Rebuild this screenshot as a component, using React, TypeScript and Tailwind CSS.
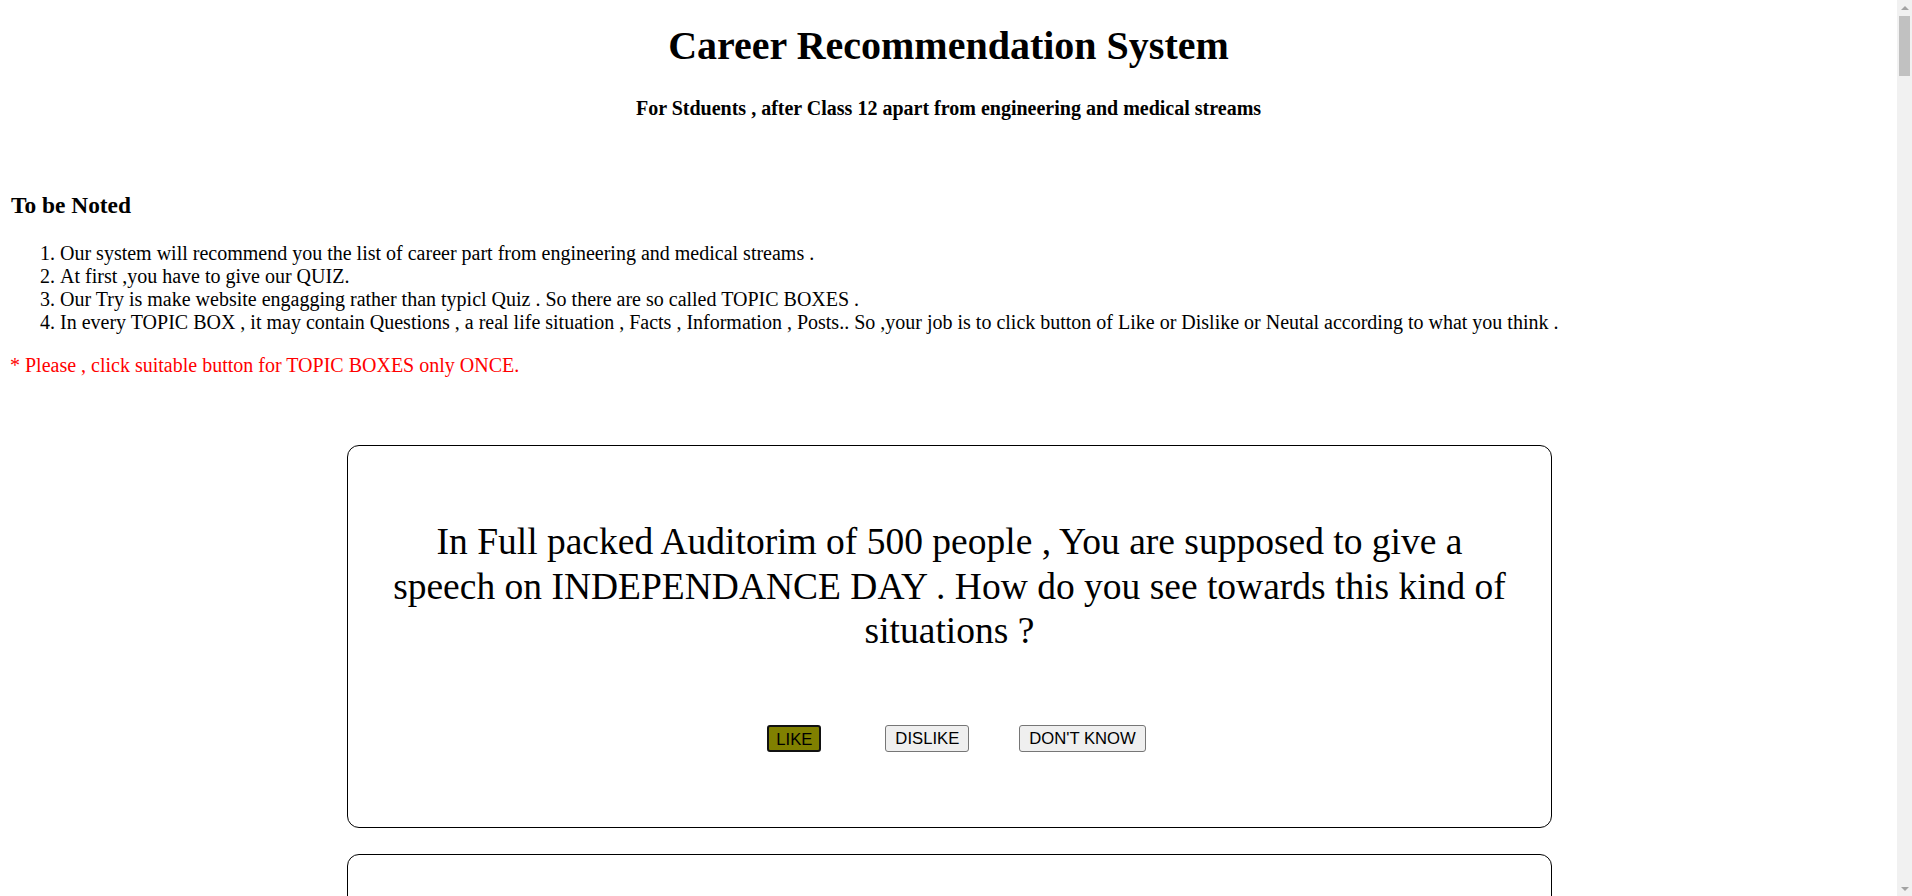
import React from 'react';

const topics: string[] = [
    'In Full packed Auditorim of 500 people , You are supposed to give a speech on INDEPENDANCE DAY . How do you see towards this kind of situations ?',
    'You have been given a chance to write an article for your school magazine . How do you feel about writing ?',
    'Fact : A Chartered Accountant audits accounts of big companies and helps them in managing their taxes .',
    'You are asked to draw a poster for the annual function of your school . How do you see towards this ?',
    'Your friend is sad and wants to talk to you about his problems . Do you like listening and helping people ?',
    'Information : Lawyers argue cases in court and help people to get justice .',
    'You are given a task to plan a trip for your whole class . How do you see towards managing such events ?',
    'Post : "Designing clothes is my passion" - a famous fashion designer .',
    'You have to teach a small kid his school lessons . Do you enjoy teaching others ?',
    'Fact : Hotel Management professionals work in big hotels , cruises and airlines .',
    'You are asked to take photographs at a wedding function . How do you see towards photography ?',
    'Information : Journalists report news from all over the world for newspapers and TV channels .',
    'You have to sell some products at your school fair . Do you like selling things to people ?',
    'You are asked to play a role in the school drama . How do you see towards acting ?',
    'Fact : Psychologists study the human mind and behaviour .',
    'You are asked to manage the accounts of your school canteen . Do you like working with numbers ?',
    'Post : "Music is the language of soul" - a famous singer .',
    'You have to organise a cleanliness drive in your area . How do you see towards social work ?',
    'Information : Civil Servants work for the government and make policies for the country .',
    'You are given a chance to cook for your family on a festival . Do you enjoy cooking ?',
    'Fact : Architects design buildings , houses and bridges .',
    'You are asked to debate on a social topic in front of judges . How do you see towards debates ?',
    'You have to learn a new foreign language in 3 months . Do you like learning languages ?',
    'Information : Animators make cartoons and visual effects for movies and games .',
    'You are asked to take care of animals in a shelter home . How do you see towards this ?',
    'Fact : Economists study how money , goods and services move in a country .',
    'You are given a chance to interview a famous sportsperson . How do you feel about it ?',
    'Post : "Every plant has a story" - a botanist .',
    'You have to decorate your classroom for the annual day . Do you like interior decoration ?',
    'Information : Pilots fly aeroplanes and travel around the world .',
];

function TopicBox({ text, first }: { text: string; first: boolean }) {
    return (
        <div className="flex justify-center pl-[2px]">
            <div className="w-[1205px] border border-black rounded-[12px] px-[40px] pt-[74px] pb-[75px]">
                <h2 className="text-center text-[37.5px] leading-[44.5px] font-normal">{text}</h2>

                {/* buttons */}
                <div className="mt-[71px] flex justify-center pl-[14px] font-['Liberation_Sans',Arial,sans-serif] text-[16.67px] text-black">
                    <button
                        className={`h-[27px] rounded-[3px] ${
                            first
                                ? 'px-[7px] bg-[#808000] border-2 border-[#111111]'
                                : 'px-[9px] bg-[#efefef] border border-[#767676]'
                        }`}
                    >
                        LIKE
                    </button>
                    <button className="ml-[64px] h-[27px] px-[9px] rounded-[3px] bg-[#efefef] border border-[#767676]">
                        DISLIKE
                    </button>
                    <button className="ml-[50px] h-[27px] px-[9px] rounded-[3px] bg-[#efefef] border border-[#767676]">
                        DON'T KNOW
                    </button>
                </div>
            </div>
        </div>
    );
}

export default function App() {
    return (
        <div className="flex bg-white">
            <main className="flex-1 min-w-0 font-['Liberation_Serif','Times_New_Roman',serif] text-black pb-[40px]">
                <h1 className="pt-[23px] text-center text-[40px] leading-[46px] font-bold">
                    Career Recommendation System
                </h1>
                <h4 className="mt-[28px] text-center text-[20px] leading-[23px] font-bold">
                    For Stduents , after Class 12 apart from engineering and medical streams
                </h4>

                <div className="px-[10px]">
                    <h3 className="mt-[72px] text-[23.4px] leading-[27px] font-bold pl-px">To be Noted</h3>
                    <ol className="mt-[23px] list-decimal pl-[50px] text-[20px] leading-[23px]">
                        <li>Our system will recommend you the list of career part from engineering and medical streams .</li>
                        <li>At first ,you have to give our QUIZ.</li>
                        <li>Our Try is make website engagging rather than typicl Quiz . So there are so called TOPIC BOXES .</li>
                        <li>
                            In every TOPIC BOX , it may contain Questions , a real life situation , Facts , Information , Posts.. So ,your job is to click button of Like or Dislike or Neutal according to what you think .
                        </li>
                    </ol>
                    <p className="mt-[20px] text-[20px] leading-[23px] text-[#ff0000]">
                        * Please , click suitable button for TOPIC BOXES only ONCE.
                    </p>
                </div>

                <div className="mt-[68px] flex flex-col gap-[26px]">
                    {topics.map((t, i) => (
                        <TopicBox key={i} text={t} first={i === 0} />
                    ))}
                </div>
            </main>

            {/* browser scrollbar */}
            <aside className="sticky top-0 self-start h-[896px] w-[15px] shrink-0 bg-[#f1f1f1] flex flex-col items-center">
                <div className="h-[15px] flex items-center justify-center">
                    <div className="w-0 h-0 border-l-[4px] border-r-[4px] border-b-[4px] border-l-transparent border-r-transparent border-b-[#a3a3a3]" />
                </div>
                <div className="mt-px w-[11px] h-[60px] bg-[#c1c1c1]" />
                <div className="flex-1" />
                <div className="h-[15px] flex items-center justify-center">
                    <div className="w-0 h-0 border-l-[4px] border-r-[4px] border-t-[4px] border-l-transparent border-r-transparent border-t-[#a3a3a3]" />
                </div>
            </aside>
        </div>
    );
}
